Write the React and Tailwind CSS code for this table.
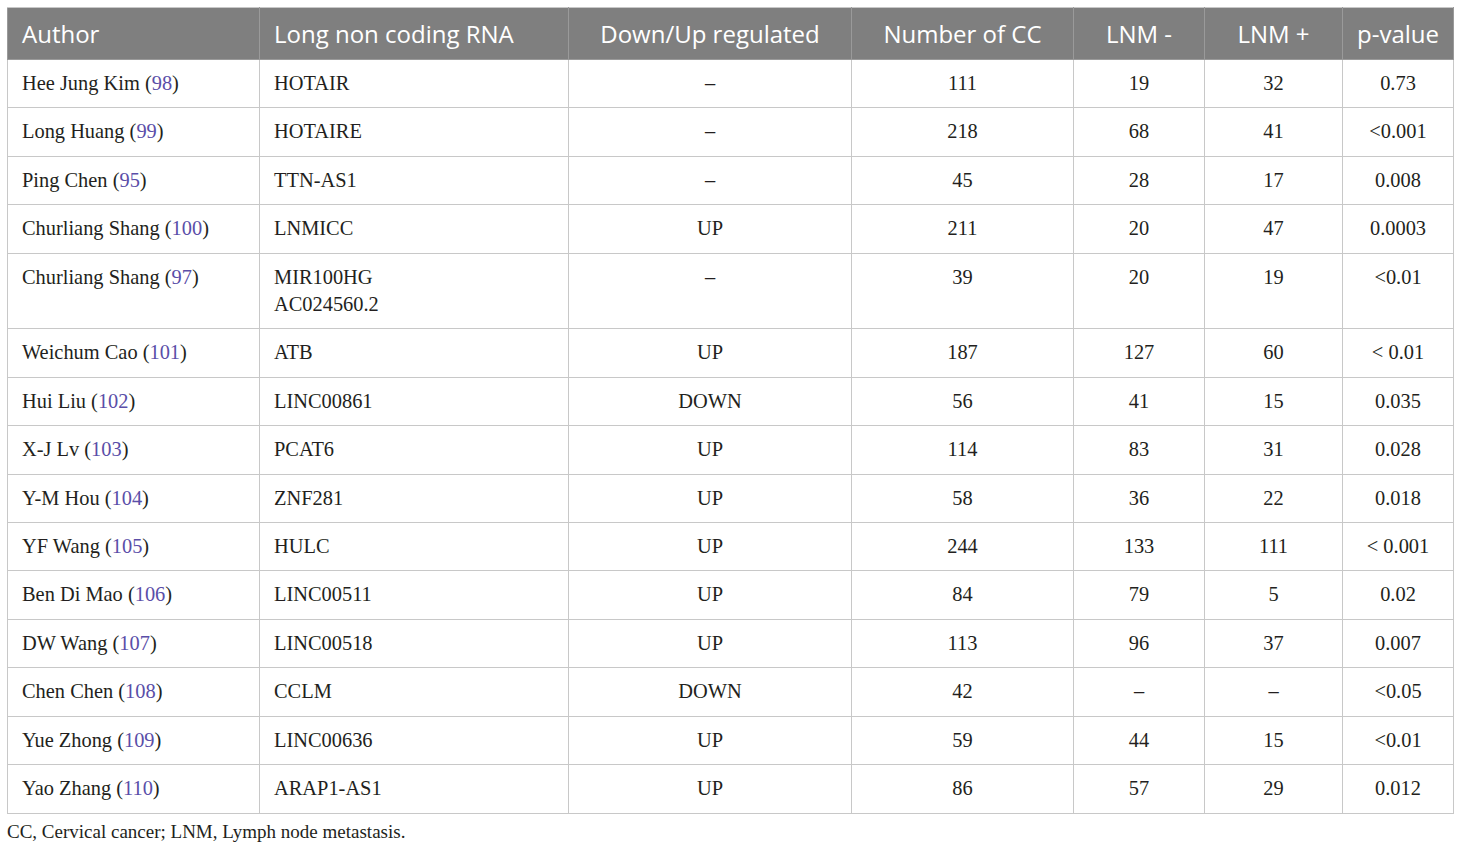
const rows = [
  ["Hee Jung Kim", "98", ["HOTAIR"], "–", "111", "19", "32", "0.73"],
  ["Long Huang", "99", ["HOTAIRE"], "–", "218", "68", "41", "<0.001"],
  ["Ping Chen", "95", ["TTN-AS1"], "–", "45", "28", "17", "0.008"],
  ["Churliang Shang", "100", ["LNMICC"], "UP", "211", "20", "47", "0.0003"],
  ["Churliang Shang", "97", ["MIR100HG", "AC024560.2"], "–", "39", "20", "19", "<0.01"],
  ["Weichum Cao", "101", ["ATB"], "UP", "187", "127", "60", "< 0.01"],
  ["Hui Liu", "102", ["LINC00861"], "DOWN", "56", "41", "15", "0.035"],
  ["X-J Lv", "103", ["PCAT6"], "UP", "114", "83", "31", "0.028"],
  ["Y-M Hou", "104", ["ZNF281"], "UP", "58", "36", "22", "0.018"],
  ["YF Wang", "105", ["HULC"], "UP", "244", "133", "111", "< 0.001"],
  ["Ben Di Mao", "106", ["LINC00511"], "UP", "84", "79", "5", "0.02"],
  ["DW Wang", "107", ["LINC00518"], "UP", "113", "96", "37", "0.007"],
  ["Chen Chen", "108", ["CCLM"], "DOWN", "42", "–", "–", "<0.05"],
  ["Yue Zhong", "109", ["LINC00636"], "UP", "59", "44", "15", "<0.01"],
  ["Yao Zhang", "110", ["ARAP1-AS1"], "UP", "86", "57", "29", "0.012"],
];

const heads = [
  ["Author", "w-[252px] text-left"],
  ["Long non coding RNA", "w-[309px] text-left"],
  ["Down/Up regulated", "w-[283px] text-center"],
  ["Number of CC", "w-[222px] text-center"],
  ["LNM -", "w-[131px] text-center"],
  ["LNM +", "w-[138px] text-center"],
  ["p-value", "w-[111px] text-center"],
];

const td = "border border-[#c8c8c8] px-[14px] py-[10px] leading-[27.4px] align-top";

export default function App() {
  return (
    <div className="bg-white min-h-[849px] pt-[7px] pl-[7px]">
      <table className="table-fixed border-collapse w-[1446px] text-[#231f20] font-['Liberation_Serif',serif] text-[20.4px]">
        <thead>
          <tr className="bg-[#7f7f7f] text-white font-['Open_Sans',sans-serif] text-[24px]">
            {heads.map(([h, c]) => (
              <th key={h} className={`${c} font-normal border border-[#9a9a9a] border-t-[#c8c8c8] px-[14px] py-[10px] leading-[31px]`}>
                {h}
              </th>
            ))}
          </tr>
        </thead>
        <tbody>
          {rows.map((r, i) => (
            <tr key={i}>
              <td className={td}>
                {r[0]} (<span className="text-[#5a4ea8]">{r[1]}</span>)
              </td>
              <td className={td}>
                {r[2].map((l) => (
                  <div key={l}>{l}</div>
                ))}
              </td>
              {r.slice(3).map((v, j) => (
                <td key={j} className={`${td} text-center`}>
                  {v}
                </td>
              ))}
            </tr>
          ))}
        </tbody>
      </table>
      <p className="font-['Liberation_Serif',serif] text-[19px] text-[#231f20] mt-[6px] leading-[24px]">
        CC, Cervical cancer; LNM, Lymph node metastasis.
      </p>
    </div>
  );
}
